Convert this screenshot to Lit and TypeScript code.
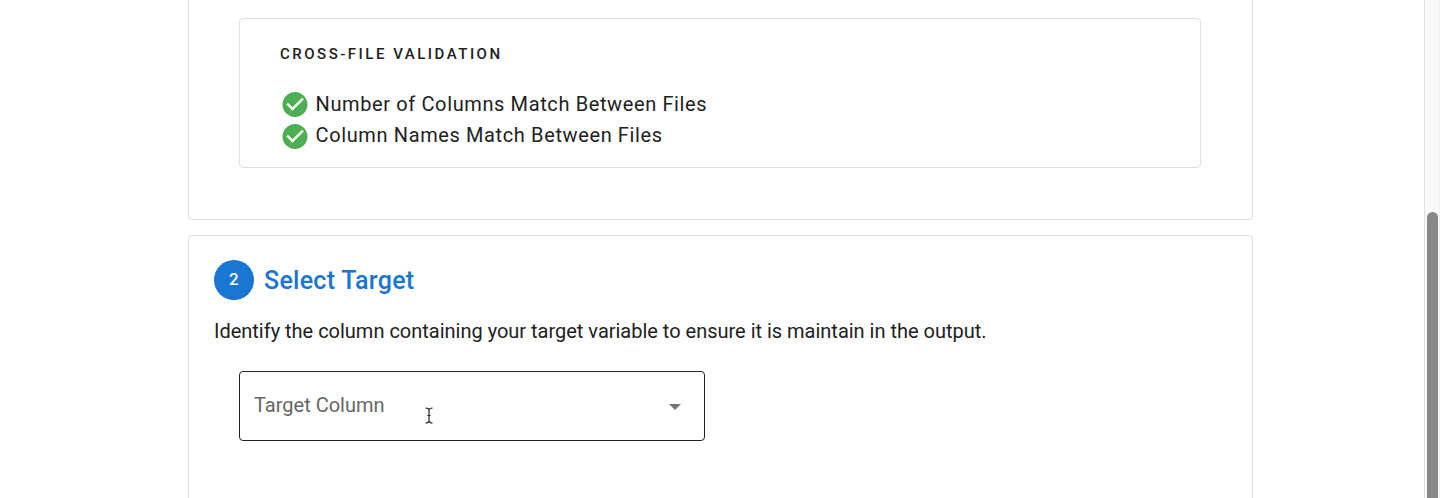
import { LitElement, html, css } from "lit";
import { customElement } from "lit/decorators.js";

@customElement("app-root")
export class AppRoot extends LitElement {
  static styles = css`
    * { box-sizing: border-box; }
    :host { display: flex; width: 1440px; height: 498px; overflow: hidden; background: #fff; color: #212121; font-family: Roboto, sans-serif; }
    .page { flex: 1; padding-left: 188px; display: flex; flex-direction: column; gap: 15px; }
    .card { width: 1065px; border: 1px solid #e0e0e0; border-radius: 4px; flex: none; }
    .first { height: 220px; border-top: 0; border-radius: 0 0 4px 4px; padding: 18px 0 0 50px; }
    .second { height: 320px; padding: 24px 25px; }
    .validation { width: 962px; height: 150px; border: 1px solid #e0e0e0; border-radius: 4px; padding: 25px 40px; }
    .over { font-size: 15px; line-height: 20px; font-weight: 500; letter-spacing: 2.5px; white-space: nowrap; margin-bottom: 25px; }
    .row { display: flex; align-items: flex-start; height: 31px; line-height: 31px; font-size: 20px; letter-spacing: 0.617px; gap: 5.6px; white-space: nowrap; }
    .row svg { margin-top: 1px; flex: none; }
    .row + .row svg { margin-top: 2px; }
    .head { display: flex; align-items: center; gap: 10px; height: 40px; color: #1976d2; font-size: 25px; font-weight: 500; letter-spacing: 0.27px; }
    .title { padding-top: 1px; }
    .num { width: 40px; height: 40px; border-radius: 50%; background: #1976d2; color: #fff; font-size: 17px; padding-bottom: 2px; display: flex; align-items: center; justify-content: center; }
    .desc { margin-top: 16px; font-size: 20px; line-height: 30px; white-space: nowrap; letter-spacing: -0.01px; }
    .select { position: relative; margin: 25px 0 0 25px; width: 466px; height: 70px; border: 1px solid #212121; border-radius: 4px; padding: 0 23px 0 14px; display: flex; align-items: center; justify-content: space-between; color: #666; font-size: 20px; }
    .label { padding-bottom: 2px; }
    .arrow { margin-top: 2px; }
    .cursor { position: absolute; left: 184px; top: 35px; }
    .track { width: 16px; background: #fafafa; border-left: 1px solid #e0e0e0; border-right: 1px solid #f0f0f0; padding: 212px 1px 0 2px; }
    .thumb { height: 400px; border-radius: 6px; background: #888; }
  `;

  check() {
    return html`<svg width="30" height="30" viewBox="0 0.4 24 24"><path fill="#4caf50" d="M12 2C6.5 2 2 6.5 2 12S6.5 22 12 22 22 17.5 22 12 17.5 2 12 2M10 17L5 12L6.41 10.59L10 14.17L17.59 6.58L19 8L10 17Z"/></svg>`;
  }

  render() {
    return html`
      <div class="page">
        <section class="card first">
          <div class="validation">
            <div class="over">CROSS-FILE VALIDATION</div>
            <div class="row">${this.check()}<span>Number of Columns Match Between Files</span></div>
            <div class="row">${this.check()}<span>Column Names Match Between Files</span></div>
          </div>
        </section>
        <section class="card second">
          <div class="head"><span class="num">2</span><span class="title">Select Target</span></div>
          <div class="desc">Identify the column containing your target variable to ensure it is maintain in the output.</div>
          <div class="select">
            <span class="label">Target Column</span>
            <svg class="arrow" width="12" height="6" viewBox="0 0 12 6"><path fill="#757575" d="M0 0H12L6 6Z"/></svg>
            <svg class="cursor" width="10" height="18" viewBox="0 0 10 18" fill="none" stroke="#222" stroke-width="1.2"><path d="M1.5 1Q5 1 5 3.5Q5 1 8.5 1M5 3.5V13.5M1.5 16Q5 16 5 13.5Q5 16 8.5 16M3.5 8.5H6.5"/></svg>
          </div>
        </section>
      </div>
      <div class="track"><div class="thumb"></div></div>
    `;
  }
}
